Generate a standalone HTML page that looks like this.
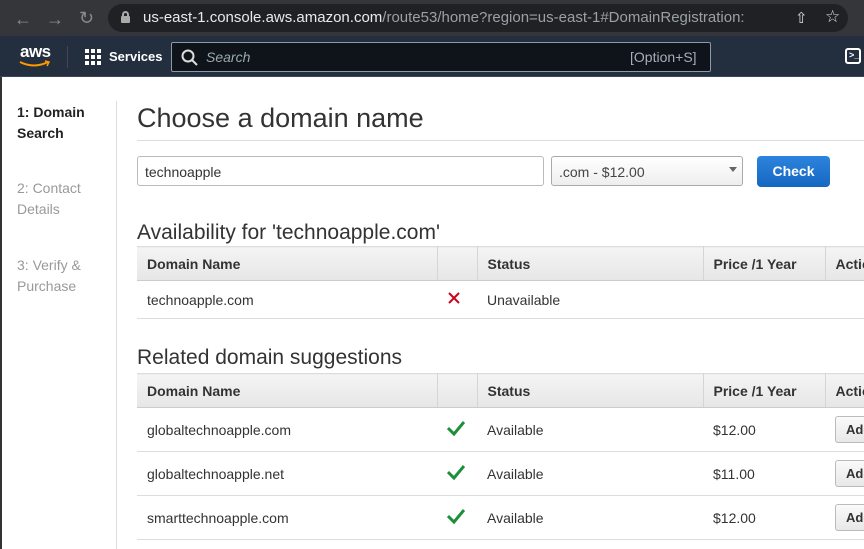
<!DOCTYPE html>
<html style="width:864px;height:549px;overflow:hidden"><head><meta charset="utf-8"><style>
*{margin:0;padding:0;box-sizing:border-box}
body{width:864px;height:549px;overflow:hidden;background:#fff;font-family:"Liberation Sans",Arial,sans-serif;position:relative}
.a{position:absolute}
.top{left:0;top:0;width:864px;height:36px;background:#35363a}
.url{left:108px;top:4px;width:740px;height:28px;background:#202124;border-radius:14px}
.nav{left:0;top:36px;width:864px;height:41px;background:#232f3e;border-bottom:1px solid #3b4656}
.side{color:#999;font-size:14px;line-height:21px}
th,td{font-size:14px;text-align:left;color:#333;white-space:nowrap;overflow:hidden}
table{border-collapse:collapse;position:absolute;left:137px;width:836px;table-layout:fixed}
th{height:34px;background:linear-gradient(#f4f4f4,#e6e6e6);font-weight:bold;padding-left:10px;border-right:1px solid #d5d5d5;border-top:1px solid #ddd;border-bottom:1px solid #ccc}
td{padding-left:10px;border-bottom:1px solid #ddd}
.add{display:inline-block;border:1px solid #bbb;border-radius:3px;background:linear-gradient(#fafafa,#e8e8e8);font-weight:bold;font-size:13px;padding:5px 10px;color:#333}
</style></head><body>
<div class="a top"></div>
<div class="a" style="left:14px;top:9px;color:#8a8b8d;font-size:18px">&#8592;</div>
<div class="a" style="left:46px;top:9px;color:#8a8b8d;font-size:18px">&#8594;</div>
<div class="a" style="left:79px;top:8px;color:#8a8b8d;font-size:18px">&#8635;</div>
<div class="a url"></div>
<div class="a" style="left:121px;top:16px;width:9px;height:7px;background:#aaa;border-radius:1px"></div>
<div class="a" style="left:122px;top:11px;width:7px;height:7px;border:2px solid #aaa;border-radius:4px 4px 0 0"></div>
<div class="a" style="left:143px;top:9px;font-size:15px;color:#e8eaed;white-space:nowrap">us-east-1.console.aws.amazon.com<span style="color:#9aa0a6">/route53/home?region=us-east-1#DomainRegistration:</span></div>
<div class="a" style="left:795px;top:9px;color:#ddd;font-size:15px">&#8679;</div>
<div class="a" style="left:825px;top:7px;color:#ddd;font-size:17px">&#9734;</div>
<div class="a nav"></div>
<div class="a" style="left:20px;top:42px;color:#fff;font-size:17px;font-weight:bold;letter-spacing:-0.5px">aws</div>
<svg class="a" style="left:18px;top:60px" width="34" height="8"><path d="M2 2 Q16 9 30 2" stroke="#ff9900" stroke-width="2" fill="none"/><path d="M27 1 L31 2 L29 6" stroke="#ff9900" stroke-width="1.5" fill="none"/></svg>
<div class="a" style="left:67px;top:46px;width:1px;height:22px;background:#445"></div>
<svg class="a" style="left:85px;top:49px" width="17" height="17" fill="#fff"><rect x="0" y="0" width="4" height="4"/><rect x="6" y="0" width="4" height="4"/><rect x="12" y="0" width="4" height="4"/><rect x="0" y="6" width="4" height="4"/><rect x="6" y="6" width="4" height="4"/><rect x="12" y="6" width="4" height="4"/><rect x="0" y="12" width="4" height="4"/><rect x="6" y="12" width="4" height="4"/><rect x="12" y="12" width="4" height="4"/></svg>
<div class="a" style="left:109px;top:49px;color:#fff;font-size:13px;font-weight:bold">Services</div>
<div class="a" style="left:171px;top:42px;width:540px;height:30px;background:#0f141a;border:1px solid #8d99a8;border-radius:2px"></div>
<svg class="a" style="left:181px;top:49px" width="17" height="17"><circle cx="7" cy="7" r="5.5" stroke="#ddd" stroke-width="2" fill="none"/><path d="M11 11 L16 16" stroke="#ddd" stroke-width="2"/></svg>
<div class="a" style="left:206px;top:49px;color:#9aa;font-size:14px;font-style:italic">Search</div>
<div class="a" style="left:630px;top:49px;color:#aab;font-size:14px">[Option+S]</div>
<div class="a" style="left:845px;top:48px;width:16px;height:16px;border:2px solid #fff;border-radius:3px;color:#fff;font-size:9px;line-height:11px;padding-left:2px;font-weight:bold">&gt;_</div>
<div class="a" style="left:0;top:77px;width:2px;height:472px;background:#333"></div>
<div class="a side" style="left:17px;top:102px;color:#222;font-weight:bold">1: Domain<br>Search</div>
<div class="a side" style="left:17px;top:178px">2: Contact<br>Details</div>
<div class="a side" style="left:17px;top:255px">3: Verify &amp;<br>Purchase</div>
<div class="a" style="left:116px;top:101px;width:1px;height:448px;background:#ddd"></div>
<div class="a" style="left:137px;top:103px;font-size:27px;color:#333">Choose a domain name</div>
<div class="a" style="left:137px;top:140px;width:727px;height:1px;background:#ddd"></div>
<div class="a" style="left:137px;top:156px;width:407px;height:30px;border:1px solid #bbb;border-radius:3px;font-size:14px;color:#333;padding:7px 7px">technoapple</div>
<div class="a" style="left:551px;top:156px;width:192px;height:30px;border:1px solid #aaa;border-radius:3px;background:linear-gradient(#fff,#eee);font-size:14px;color:#444;padding:7px 7px">.com - $12.00</div>
<div class="a" style="left:729px;top:167px;border:4px solid transparent;border-top:5px solid #666"></div>
<div class="a" style="left:757px;top:156px;width:73px;height:31px;background:linear-gradient(#2d83dd,#1568c0);border-radius:4px;color:#fff;font-weight:bold;font-size:14px;text-align:center;line-height:31px">Check</div>
<div class="a" style="left:137px;top:221px;font-size:21px;color:#333">Availability for 'technoapple.com'</div>
<table style="top:246px">
<col style="width:300px"><col style="width:40px"><col style="width:226px"><col style="width:122px"><col style="width:148px">
<tr><th>Domain Name</th><th></th><th>Status</th><th>Price /1 Year</th><th>Actions</th></tr>
<tr style="height:38px"><td>technoapple.com</td><td><svg width="14" height="14"><path d="M2 2L12 12M12 2L2 12" stroke="#d0021b" stroke-width="2"/></svg></td><td>Unavailable</td><td></td><td></td></tr>
</table>
<div class="a" style="left:137px;top:346px;font-size:21px;color:#333">Related domain suggestions</div>
<table style="top:373px">
<col style="width:300px"><col style="width:40px"><col style="width:226px"><col style="width:122px"><col style="width:148px">
<tr><th>Domain Name</th><th></th><th>Status</th><th>Price /1 Year</th><th>Actions</th></tr>
<tr style="height:44px"><td>globaltechnoapple.com</td><td><svg width="18" height="16"><path d="M1 8L7 14L17 2" stroke="#1d8f3a" stroke-width="3" fill="none"/></svg></td><td>Available</td><td>$12.00</td><td><span class="add">Add</span></td></tr>
<tr style="height:44px"><td>globaltechnoapple.net</td><td><svg width="18" height="16"><path d="M1 8L7 14L17 2" stroke="#1d8f3a" stroke-width="3" fill="none"/></svg></td><td>Available</td><td>$11.00</td><td><span class="add">Add</span></td></tr>
<tr style="height:44px"><td>smarttechnoapple.com</td><td><svg width="18" height="16"><path d="M1 8L7 14L17 2" stroke="#1d8f3a" stroke-width="3" fill="none"/></svg></td><td>Available</td><td>$12.00</td><td><span class="add">Add</span></td></tr>
</table>
</body></html>
